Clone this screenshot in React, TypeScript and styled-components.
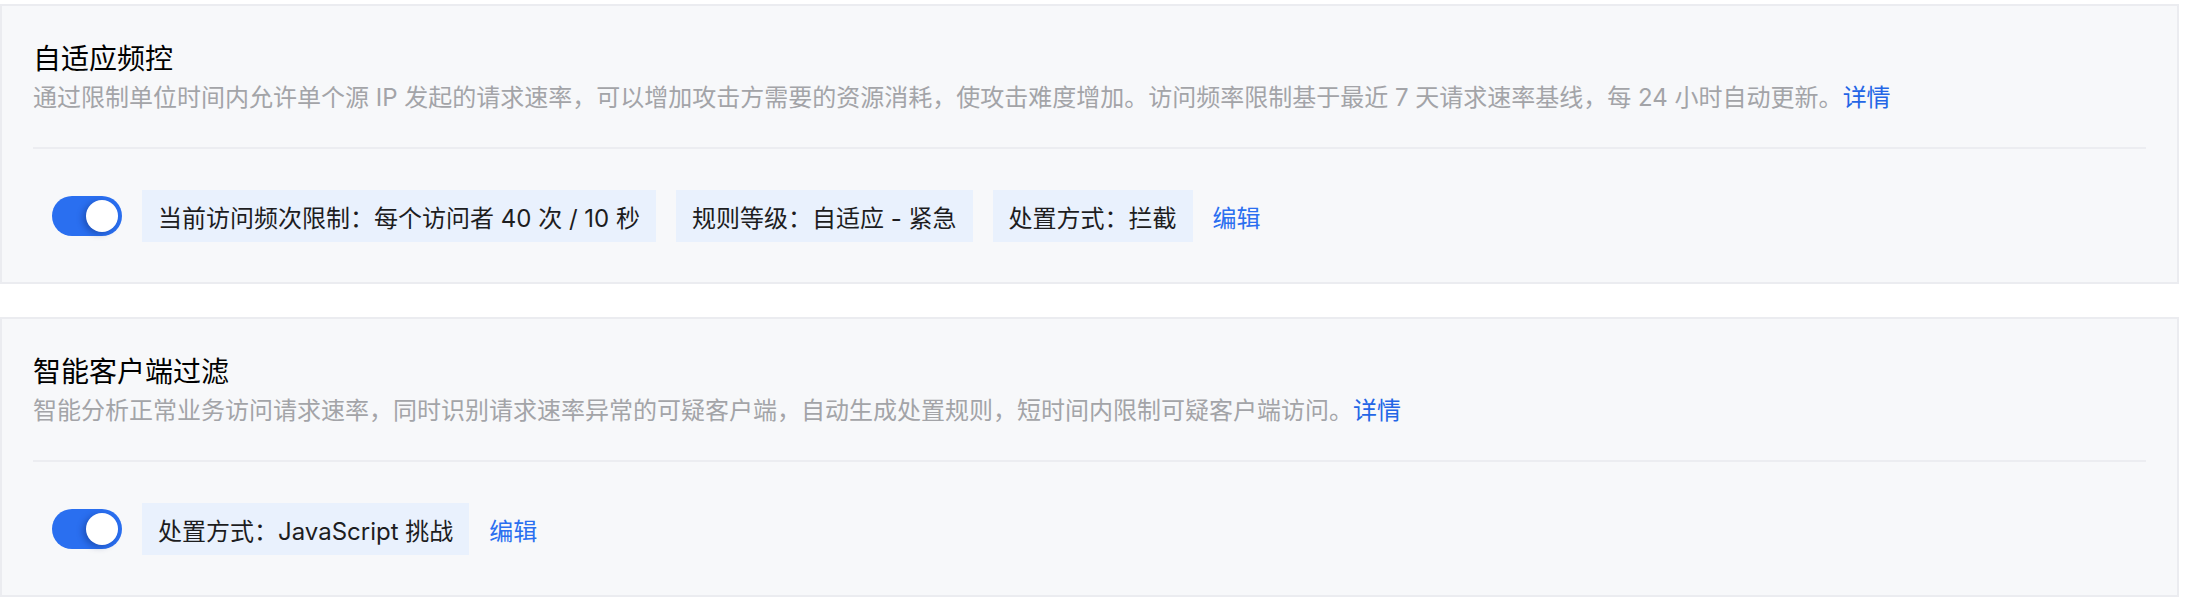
import styled, { createGlobalStyle } from 'styled-components';

const GlobalStyle = createGlobalStyle`
	body {
		margin: 0;
		background: #ffffff;
		font-family: Inter, "Noto Sans CJK SC", "Noto Sans", sans-serif;
		-webkit-font-smoothing: antialiased;
	}
`;

const StyledPage = styled.div`
	display: flex;
	flex-direction: column;
	gap: 33px;
	width: 2179px;
	padding-top: 4px;
`;

const StyledCard = styled.section`
	background: #f7f8fa;
	border: 2px solid #ebecf0;
	padding: 33px 31px 40px;
`;

const StyledTitle = styled.h2`
	margin: 0;
	font-size: 28px;
	line-height: 40px;
	font-weight: 400;
	color: #000000;
`;

const StyledDesc = styled.p`
	margin: 0;
	font-size: 24px;
	line-height: 38px;
	color: #a3a4a8;
`;

const StyledLink = styled.a<{ $strong?: boolean }>`
	color: ${(p) => (p.$strong ? '#2b6ff0' : '#2466e6')};
	text-decoration: none;
	cursor: pointer;
	font-size: 24px;
`;

const StyledDivider = styled.hr`
	margin: 30px 0 0;
	border: none;
	height: 2px;
	background: #ecedf1;
`;

const StyledControlRow = styled.div`
	display: flex;
	align-items: center;
	gap: 20px;
	margin-top: 41px;
	padding-left: 19px;
`;

const StyledSwitch = styled.button`
	display: flex;
	align-items: center;
	justify-content: flex-end;
	width: 70px;
	height: 40px;
	padding: 0 4px;
	border: none;
	border-radius: 20px;
	background: #2a6ff0;
	cursor: pointer;
`;

const StyledKnob = styled.span`
	width: 32px;
	height: 32px;
	border-radius: 50%;
	background: #ffffff;
	box-shadow: -3px 2px 6px rgba(10, 30, 90, 0.35);
`;

const StyledTag = styled.span`
	display: inline-flex;
	align-items: center;
	height: 52px;
	padding: 0 16px;
	background: #e9f1fd;
	font-size: 24px;
	color: #1d1d1f;
	white-space: nowrap;
`;

type RuleCardProps = {
	title: string;
	desc: string;
	tags: string[];
};

function RuleCard({ title, desc, tags }: RuleCardProps) {
	return (
		<StyledCard>
			<StyledTitle>{title}</StyledTitle>
			<StyledDesc>
				{desc}
				<StyledLink>详情</StyledLink>
			</StyledDesc>
			<StyledDivider />
			<StyledControlRow>
				<StyledSwitch aria-pressed="true">
					<StyledKnob />
				</StyledSwitch>
				{tags.map((t) => (
					<StyledTag key={t}>{t}</StyledTag>
				))}
				<StyledLink $strong>编辑</StyledLink>
			</StyledControlRow>
		</StyledCard>
	);
}

function App() {
	return (
		<>
			<GlobalStyle />
			<StyledPage>
				<RuleCard
					title="自适应频控"
					desc="通过限制单位时间内允许单个源 IP 发起的请求速率，可以增加攻击方需要的资源消耗，使攻击难度增加。访问频率限制基于最近 7 天请求速率基线，每 24 小时自动更新。"
					tags={['当前访问频次限制：每个访问者 40 次 / 10 秒', '规则等级：自适应 - 紧急', '处置方式：拦截']}
				/>
				<RuleCard
					title="智能客户端过滤"
					desc="智能分析正常业务访问请求速率，同时识别请求速率异常的可疑客户端，自动生成处置规则，短时间内限制可疑客户端访问。"
					tags={['处置方式：JavaScript 挑战']}
				/>
			</StyledPage>
		</>
	);
}

export default App;
